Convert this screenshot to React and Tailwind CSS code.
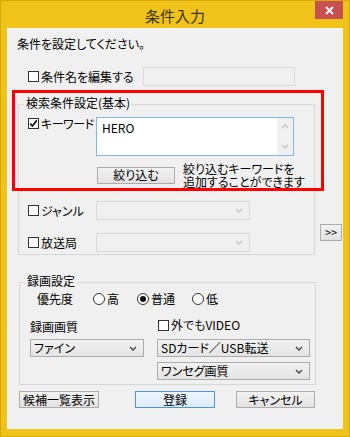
import React from "react";

// small chevron used by the combo boxes and the textarea scrollbar
const Chevron = ({ up = false, color = "#444" }) => (
  <svg width="8" height="5" viewBox="0 0 8 5" className="block">
    <path
      d={up ? "M1 4L4 1l3 3" : "M1 1l3 3 3-3"}
      fill="none"
      stroke={color}
      strokeWidth="1.4"
    />
  </svg>
);

const CheckBox = ({ checked = false }) => (
  <span className="w-[11px] h-[11px] shrink-0 border border-[#333] bg-white flex items-center justify-center">
    {checked && (
      <svg width="9" height="9" viewBox="0 0 9 9" className="block">
        <path d="M1.3 4.6l2.1 2.4L7.8 1.4" fill="none" stroke="#111" strokeWidth="1.7" />
      </svg>
    )}
  </span>
);

const Radio = ({ checked = false }) => (
  <span className="w-[12px] h-[12px] shrink-0 rounded-full border border-[#333] bg-white flex items-center justify-center">
    {checked && <span className="w-[6px] h-[6px] rounded-full bg-[#111]" />}
  </span>
);

const Select = ({ value = "", disabled = false, className = "" }) => (
  <div
    className={`${className} flex items-center justify-between pl-[3px] pr-[6px] border ${
      disabled
        ? "border-[#d9d9d9] bg-[#f0f0f0]"
        : "border-[#acacac] bg-gradient-to-b from-[#f2f2f2] to-[#e4e4e4]"
    }`}
  >
    <span className="leading-none whitespace-nowrap">{value}</span>
    <Chevron color={disabled ? "#c4c4c4" : "#444"} />
  </div>
);

const Button = ({ children, primary = false, className = "" }) => (
  <div
    className={`${className} h-[17px] flex items-center justify-center border leading-none whitespace-nowrap ${
      primary
        ? "border-[#4f96dc] bg-gradient-to-b from-[#eef6fd] to-[#dcecfc]"
        : "border-[#acacac] bg-gradient-to-b from-[#f2f2f2] to-[#e2e2e2]"
    }`}
  >
    {children}
  </div>
);

const GroupLabel = ({ children }) => (
  <span className="absolute left-[5px] -top-[9px] px-[2px] bg-[#f0f0f0] leading-[14px] whitespace-nowrap">
    {children}
  </span>
);

export default function App() {
  return (
    <div className="w-[350px] h-[437px] bg-[#f0c31b] border border-[#d9a90c] flex flex-col text-[12px] text-black font-['Meiryo_UI','Noto_Sans_CJK_JP',sans-serif] [font-feature-settings:'palt']">
      {/* title bar */}
      <div className="relative h-[27px] shrink-0 flex items-center justify-center">
        <span className="text-[15px] text-[#3d3410] leading-none pt-[1px]">条件入力</span>
        <div className="absolute right-[6px] top-0 w-[28px] h-[18px] bg-[#c75050] flex items-center justify-center">
          <svg width="9" height="9" viewBox="0 0 9 9" className="block">
            <path d="M1 1l7 7M8 1L1 8" stroke="#fff" strokeWidth="1.8" />
          </svg>
        </div>
      </div>

      {/* client area */}
      <div className="relative mx-[6px] h-[401px] bg-[#f0f0f0] border border-[#f7f7f7]">
        <div className="pt-[7px] pl-[9px] h-[23px] leading-[16px]">条件を設定してください。</div>

        <div className="mt-[15px] h-[19px] flex items-center">
          <div className="ml-[20px] flex items-center gap-[2px]">
            <CheckBox />
            <span className="leading-none whitespace-nowrap">条件名を編集する</span>
          </div>
          <div className="ml-auto mr-[47px] w-[152px] h-[19px] border border-[#dadada] bg-[#f0f0f0]" />
        </div>

        <div className="mt-[18px] flex items-start">
          {/* 検索条件設定(基本) */}
          <div className="relative ml-[10px] w-[298px] h-[151px] border border-[#d8d8d8] pt-[12px] pl-[9px]">
            <GroupLabel>検索条件設定(基本)</GroupLabel>

            <div className="flex items-start">
              <div className="w-[68px] shrink-0 flex items-center gap-[2px] mt-[1px] h-[11px]">
                <CheckBox checked />
                <span className="leading-none whitespace-nowrap tracking-[-0.5px]">キーワード</span>
              </div>
              <div className="w-[198px] h-[39px] border border-[#84b7e8] bg-white flex">
                <span className="flex-1 pl-[5px] pt-[3px] leading-[14px]">HERO</span>
                <div className="w-[16px] bg-[#f0f0f0] flex flex-col items-center justify-between py-[6px]">
                  <Chevron up color="#c2c2c2" />
                  <Chevron color="#c2c2c2" />
                </div>
              </div>
            </div>

            <div className="mt-[6px] flex items-center">
              <Button className="ml-[69px] w-[78px]">絞り込む</Button>
              <p className="ml-[8px] leading-[13px] whitespace-nowrap">
                絞り込むキーワードを
                <br />
                追加することができます
              </p>
            </div>

            <div className="mt-[13px] h-[19px] flex items-center">
              <div className="w-[68px] shrink-0 flex items-center gap-[2px]">
                <CheckBox />
                <span className="leading-none whitespace-nowrap">ジャンル</span>
              </div>
              <Select disabled className="w-[154px] h-[19px]" />
            </div>

            <div className="mt-[13px] h-[19px] flex items-center">
              <div className="w-[68px] shrink-0 flex items-center gap-[2px]">
                <CheckBox />
                <span className="leading-none whitespace-nowrap">放送局</span>
              </div>
              <Select disabled className="w-[154px] h-[19px]" />
            </div>
          </div>

          <Button className="ml-[5px] mt-[120px] w-[22px] text-[11px]">&gt;&gt;</Button>
        </div>

        {/* 録画設定 */}
        <div className="relative mt-[27px] ml-[11px] w-[297px] h-[103px] border border-[#d8d8d8]">
          <GroupLabel>録画設定</GroupLabel>

          <div className="mt-[8px] h-[16px] flex items-center">
            <span className="ml-[17px] w-[56px] leading-none">優先度</span>
            <div className="w-[44px] flex items-center gap-[2px]">
              <Radio />
              <span className="leading-none">高</span>
            </div>
            <div className="w-[55px] flex items-center gap-[2px]">
              <Radio checked />
              <span className="leading-none">普通</span>
            </div>
            <div className="flex items-center gap-[2px]">
              <Radio />
              <span className="leading-none">低</span>
            </div>
          </div>

          <div className="mt-[11px] h-[14px] flex items-center">
            <span className="ml-[10px] w-[128px] leading-none pt-[3px]">録画画質</span>
            <div className="flex items-center gap-[2px]">
              <CheckBox />
              <span className="leading-none whitespace-nowrap">外でもVIDEO</span>
            </div>
          </div>

          <div className="mt-[7px] flex items-center">
            <Select value="ファイン" className="ml-[10px] w-[114px] h-[18px]" />
            <Select value="SDカード／USB転送" className="ml-[13px] w-[153px] h-[18px]" />
          </div>
          <div className="mt-[5px] flex">
            <Select value="ワンセグ画質" className="ml-[137px] w-[153px] h-[18px]" />
          </div>
        </div>

        <div className="mt-[6px] flex items-center">
          <Button className="ml-[11px] w-[80px]">候補一覧表示</Button>
          <Button primary className="ml-[36px] w-[80px]">登録</Button>
          <Button className="ml-[21px] w-[79px]">キャンセル</Button>
        </div>

        {/* red highlight drawn over the search-condition group */}
        <div className="absolute left-[4px] top-[61px] w-[312px] h-[101px] border-[3px] border-[#ff0000] pointer-events-none" />
      </div>
    </div>
  );
}
